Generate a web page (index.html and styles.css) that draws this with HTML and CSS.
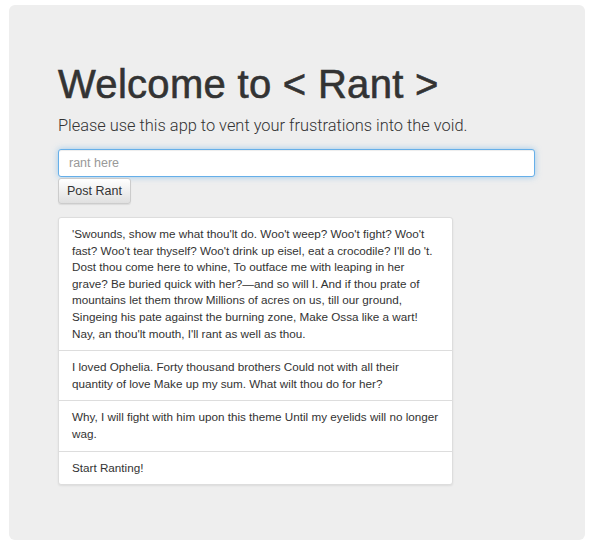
FILE: index.html
```html
<!DOCTYPE html>
<html>
<head>
<meta charset="utf-8">
<link rel="stylesheet" href="styles.css">
</head>
<body>
<div class="jumbotron">
  <h1 class="title">Welcome to &lt; Rant &gt;</h1>
  <p class="lead">Please use this app to vent your frustrations into the void.</p>
  <form class="rant-form">
    <input class="rant-input" type="text" placeholder="rant here">
    <button class="btn" type="button">Post Rant</button>
  </form>
  <ul class="list-group">
    <li class="list-item">'Swounds, show me what thou'lt do. Woo't weep? Woo't fight? Woo't fast? Woo't tear thyself? Woo't drink up eisel, eat a crocodile? I'll do 't. Dost thou come here to whine, To outface me with leaping in her grave? Be buried quick with her?—and so will I. And if thou prate of mountains let them throw Millions of acres on us, till our ground, Singeing his pate against the burning zone, Make Ossa like a wart! Nay, an thou'lt mouth, I'll rant as well as thou.</li>
    <li class="list-item">I loved Ophelia. Forty thousand brothers Could not with all their quantity of love Make up my sum. What wilt thou do for her?</li>
    <li class="list-item">Why, I will fight with him upon this theme Until my eyelids will no longer wag.</li>
    <li class="list-item">Start Ranting!</li>
  </ul>
</div>
</body>
</html>
```
FILE: styles.css
```css
html, body {
  margin: 0;
  padding: 0;
  background: #fff;
}
body {
  padding: 5px 15px 19px 9px;
  font-family: "Liberation Sans", Arial, sans-serif;
  color: #333;
}
.jumbotron {
  background: #eeeeee;
  border-radius: 6px;
  padding: 56px 49px 56px 49px;
  box-sizing: border-box;
  width: 576px;
  height: 535px;
}
.title {
  margin: 0;
  font-size: 40px;
  font-weight: 400;
  line-height: 46px;
  color: #333;
  -webkit-text-stroke: 0.6px #333;
  letter-spacing: 0.3px;
}
.lead {
  margin: 8px 0 12px 0;
  font-family: Roboto, "Liberation Sans", sans-serif;
  font-weight: 300;
  font-size: 16.4px;
  line-height: 22px;
  color: #333;
}
.rant-form {
  display: flex;
  flex-direction: column;
  align-items: flex-start;
  gap: 1px;
  margin: 0 0 13px 0;
}
.rant-input {
  box-sizing: border-box;
  width: 477px;
  height: 28px;
  margin: 0;
  padding: 4px 10px;
  font-family: "Liberation Sans", Arial, sans-serif;
  font-size: 12.5px;
  color: #555;
  background: #fff;
  border: 1px solid #66afe9;
  border-radius: 3px;
  box-shadow: inset 0 1px 1px rgba(0,0,0,.075), 0 0 6px rgba(102,175,233,.6);
  outline: none;
}
.rant-input::placeholder {
  color: #999;
}
.btn {
  box-sizing: border-box;
  height: 26px;
  padding: 0 8px;
  font-family: "Liberation Sans", Arial, sans-serif;
  font-size: 12.5px;
  color: #333;
  background: linear-gradient(#ffffff, #e0e0e0);
  border: 1px solid #ccc;
  border-radius: 3px;
  box-shadow: 0 1px 1px rgba(0,0,0,.08);
}
.list-group {
  list-style: none;
  margin: 0;
  padding: 0;
  width: 393px;
  background: #fff;
  border: 1px solid #ddd;
  border-radius: 3px;
  box-shadow: 0 1px 2px rgba(0,0,0,.075);
}
.list-item {
  padding: 8px 11px 8px 13px;
  font-size: 11.7px;
  line-height: 16.6px;
  color: #333;
  border-top: 1px solid #ddd;
}
.list-item:first-child {
  border-top: none;
}
```
